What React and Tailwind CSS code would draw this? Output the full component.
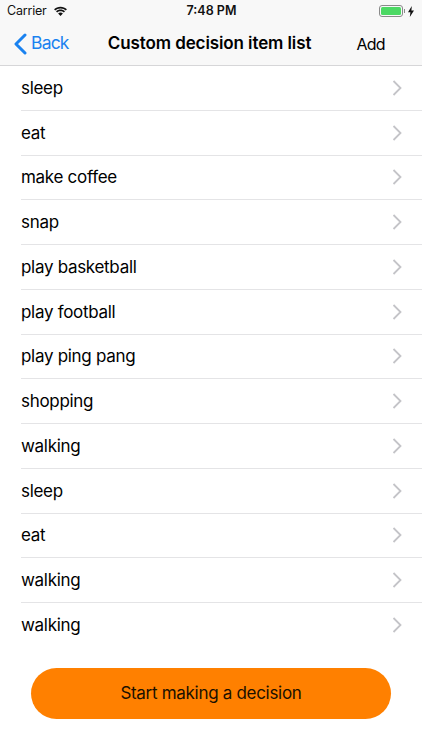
const items = [
  'sleep',
  'eat',
  'make coffee',
  'snap',
  'play basketball',
  'play football',
  'play ping pang',
  'shopping',
  'walking',
  'sleep',
  'eat',
  'walking',
  'walking',
]

function Wifi() {
  return (
    <svg width="15" height="11" viewBox="0 0 16 12" fill="#111">
      <path d="M8 2.600c2.300 0 4.300.9 5.800 2.300l1.200-1.300C13.200 1.800 10.700.7 8 .7S2.800 1.800 1 3.600l1.200 1.300C3.700 3.500 5.700 2.600 8 2.600z" />
      <path d="M8 5.700c1.400 0 2.700.5 3.700 1.400l1.200-1.300C11.600 4.600 9.900 3.900 8 3.900s-3.600.7-4.900 1.900l1.200 1.300c1-.9 2.300-1.400 3.700-1.400z" />
      <path d="M8 7.100c-1 0-1.900.4-2.600 1L8 11l2.600-2.900c-.7-.6-1.600-1-2.600-1z" />
    </svg>
  )
}

function Battery() {
  return (
    <div className="flex items-center">
      <div className="w-[24px] h-[12px] rounded-[3px] border border-[#8a8a8a] p-px">
        <div className="w-full h-full rounded-[1.5px] bg-[#4cd964]" />
      </div>
      <div className="w-px h-[4px] bg-[#8a8a8a] ml-px" />
      <svg className="ml-[3px]" width="6" height="11" viewBox="0 0 6 11" fill="#111">
        <path d="M3.800 0 0 6.200h2.400L1.800 11 6 4.400H3.400z" />
      </svg>
    </div>
  )
}

function Row({ label, last }) {
  return (
    <div className="h-[44.75px] pl-[21px] relative flex items-center justify-between">
      <span className="text-[17px] tracking-[-0.3px] text-black leading-none">{label}</span>
      <svg className="mr-[20px] mb-[1px]" width="10" height="16" viewBox="0 0 10 16" fill="none" stroke="#c4c4c8" strokeWidth="1.800">
        <path d="M1.500 1 8.500 8 1.500 15" />
      </svg>
      {!last && <div className="absolute left-[21px] right-0 bottom-0 h-px bg-[#e4e4e6]" />}
    </div>
  )
}

export default function App() {
  return (
    <div className="w-[422px] h-[750px] bg-white overflow-hidden font-['Inter','Liberation_Sans',sans-serif]">
      {/* status bar + nav */}
      <div className="h-[66px] bg-[#f8f8f8] border-b border-[#d6d6d8]">
        <div className="h-[22px] px-[7px] grid grid-cols-3 items-center">
          <div className="flex items-center gap-[6px]">
            <span className="text-[12.500px] tracking-[-0.2px] text-[#111]">Carrier</span>
            <Wifi />
          </div>
          <span className="text-[12.500px] font-semibold text-center text-[#111] pl-[1px]">7:48 PM</span>
          <div className="flex justify-end pr-[1px]">
            <Battery />
          </div>
        </div>
        <div className="h-[43px] flex items-center justify-between pl-[13px] pr-[37px]">
          <div className="flex items-center gap-[4px] text-[#1a82f0]">
            <svg width="14" height="22" viewBox="0 0 14 22" fill="none" stroke="#1a82f0" strokeWidth="3" strokeLinecap="round" strokeLinejoin="round">
              <path d="M12 2 3 11 12 20" />
            </svg>
            <span className="text-[17.500px] tracking-[-0.8px]">Back</span>
          </div>
          <span className="text-[17px] tracking-[-0.1px] font-semibold text-black mr-[6px]">Custom decision item list</span>
          <span className="text-[16px] tracking-[-0.7px] text-black">Add</span>
        </div>
      </div>

      <div>
        {items.map((item, i) => (
          <Row key={i} label={item} last={i === items.length - 1} />
        ))}
      </div>

      <div className="flex justify-center mt-[20px]">
        <button className="w-[360px] h-[51px] rounded-full bg-[#ff8000] text-[17px] tracking-[-0.3px] text-[#1a1000]">
          Start making a decision
        </button>
      </div>
    </div>
  )
}
